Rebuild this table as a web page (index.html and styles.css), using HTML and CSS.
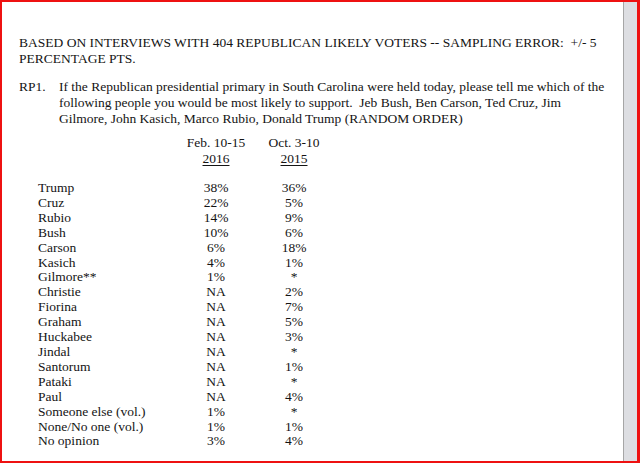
FILE: index.html
```html
<!DOCTYPE html>
<html>
<head>
<meta charset="utf-8">
<link rel="stylesheet" href="styles.css">
</head>
<body>
<div class="frame">
  <div class="page">
    <p class="intro">BASED ON INTERVIEWS WITH 404 REPUBLICAN LIKELY VOTERS -- SAMPLING ERROR:&nbsp; +/- 5<br>PERCENTAGE PTS.</p>
    <div class="question">
      <span class="qnum">RP1.</span>
      <p class="qtext">If the Republican presidential primary in South Carolina were held today, please tell me which of the following people you would be most likely to support.&nbsp; Jeb Bush, Ben Carson, Ted Cruz, Jim Gilmore, John Kasich, Marco Rubio, Donald Trump (RANDOM ORDER)</p>
    </div>
    <div class="table">
      <div class="head"></div>
      <div class="head col">Feb. 10-15<br><u>2016</u></div>
      <div class="head col">Oct. 3-10<br><u>2015</u></div>

      <div>Trump</div><div class="col">38%</div><div class="col">36%</div>
      <div>Cruz</div><div class="col">22%</div><div class="col">5%</div>
      <div>Rubio</div><div class="col">14%</div><div class="col">9%</div>
      <div>Bush</div><div class="col">10%</div><div class="col">6%</div>
      <div>Carson</div><div class="col">6%</div><div class="col">18%</div>
      <div>Kasich</div><div class="col">4%</div><div class="col">1%</div>
      <div>Gilmore**</div><div class="col">1%</div><div class="col">*</div>
      <div>Christie</div><div class="col">NA</div><div class="col">2%</div>
      <div>Fiorina</div><div class="col">NA</div><div class="col">7%</div>
      <div>Graham</div><div class="col">NA</div><div class="col">5%</div>
      <div>Huckabee</div><div class="col">NA</div><div class="col">3%</div>
      <div>Jindal</div><div class="col">NA</div><div class="col">*</div>
      <div>Santorum</div><div class="col">NA</div><div class="col">1%</div>
      <div>Pataki</div><div class="col">NA</div><div class="col">*</div>
      <div>Paul</div><div class="col">NA</div><div class="col">4%</div>
      <div>Someone else (vol.)</div><div class="col">1%</div><div class="col">*</div>
      <div>None/No one (vol.)</div><div class="col">1%</div><div class="col">1%</div>
      <div>No opinion</div><div class="col">3%</div><div class="col">4%</div>
    </div>
  </div>
  <div class="scroll"></div>
</div>
</body>
</html>
```

FILE: styles.css
```css
html, body {
  margin: 0;
  padding: 0;
  background: #ffffff;
}
.frame {
  width: 640px;
  height: 463px;
  box-sizing: border-box;
  border: 2px solid #ee1111;
  border-right-width: 3px;
  display: flex;
  overflow: hidden;
}
.page {
  flex: 1;
  background: #fff;
  padding: 33px 0 0 17px;
  font-family: "Liberation Serif", "Times New Roman", serif;
  font-size: 13.5px;
  color: #141414;
}
.scroll {
  width: 13px;
  background: #dddee2;
  border-left: 1px solid #a6a6a6;
}
.intro {
  margin: 0;
  line-height: 16px;
}
.question {
  display: flex;
  margin-top: 12px;
  line-height: 16px;
}
.qnum {
  width: 40px;
  flex: none;
}
.qtext {
  margin: 0;
  width: 550px;
}
.table {
  display: grid;
  grid-template-columns: 140px 76px 80px;
  margin-top: 8px;
  margin-left: 19px;
  line-height: 14.9px;
}
.head {
  line-height: 16px;
  margin-bottom: 14px;
}
.col {
  text-align: center;
}
u {
  text-decoration-thickness: 1px;
  text-underline-offset: 2px;
}
```
